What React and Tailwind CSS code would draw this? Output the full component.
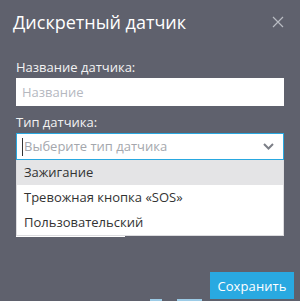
export default function App() {
  const items = ["Зажигание", "Тревожная кнопка «SOS»", "Пользовательский"];

  return (
    <div className="w-[300px] h-[301px] bg-[#5f616d] overflow-hidden flex flex-col font-['Open_Sans',sans-serif]">
      <div className="flex items-center justify-between pl-[13px] pr-[16px] h-[44px]">
        <h2 className="text-[18px] leading-[24px] text-white">Дискретный датчик</h2>
        <svg width="12" height="12" viewBox="0 0 12 12" className="text-[#b9bcc3]">
          <path d="M1 1 L11 11 M11 1 L1 11" stroke="currentColor" strokeWidth="1.2" fill="none" />
        </svg>
      </div>

      <div className="px-[16px] pt-[14px]">
        <label className="block text-[13px] leading-[18px] text-[#f3f3f3] mb-[2px]">Название датчика:</label>
        <input
          placeholder="Название"
          className="w-full h-[28px] bg-white px-[6px] text-[13px] text-[#333] placeholder:text-[#b5b8bf] outline-none"
        />

        <label className="block mt-[7px] text-[13px] leading-[18px] text-[#f3f3f3] mb-[2px]">Тип датчика:</label>
        <div className="relative">
          <div className="h-[27px] border border-[#29a8e0] bg-white flex items-center pl-[5px] pr-[9px]">
            <span className="w-px h-[18px] bg-[#333] mr-[1px]" />
            <span className="flex-1 text-[13px] text-[#a4a7ad]">Выберите тип датчика</span>
            <svg width="11" height="7" viewBox="0 0 11 7">
              <path d="M1 1 L5.5 5.5 L10 1" stroke="#7c7f87" strokeWidth="2" fill="none" />
            </svg>
          </div>
          <ul className="absolute left-0 top-full w-full bg-white border-x border-b border-[#dcdcdf] z-10 text-[13px] text-[#333]">
            {items.map((t, i) => (
              <li
                key={t}
                className={
                  "h-[25px] flex items-center pl-[7px] " + (i === 0 ? "bg-[#e4e4e6]" : "")
                }
              >
                {t}
              </li>
            ))}
          </ul>
        </div>

        <div className="mt-[10px] w-[109px] h-[67px] bg-white" />
      </div>

      <div className="flex justify-end pr-[6px] mt-[35px]">
        <button className="h-[27px] w-[84px] flex items-center justify-center bg-[#29a9e1] text-white text-[13px] leading-[20px] tracking-[0.1px]">
          Сохранить
        </button>
      </div>
      <div className="flex h-[2px]">
        <div className="ml-[150px] w-[12px] bg-[#9ccbe6]" />
        <div className="ml-[15px] w-[25px] bg-[#9ccbe6]" />
      </div>
    </div>
  );
}
